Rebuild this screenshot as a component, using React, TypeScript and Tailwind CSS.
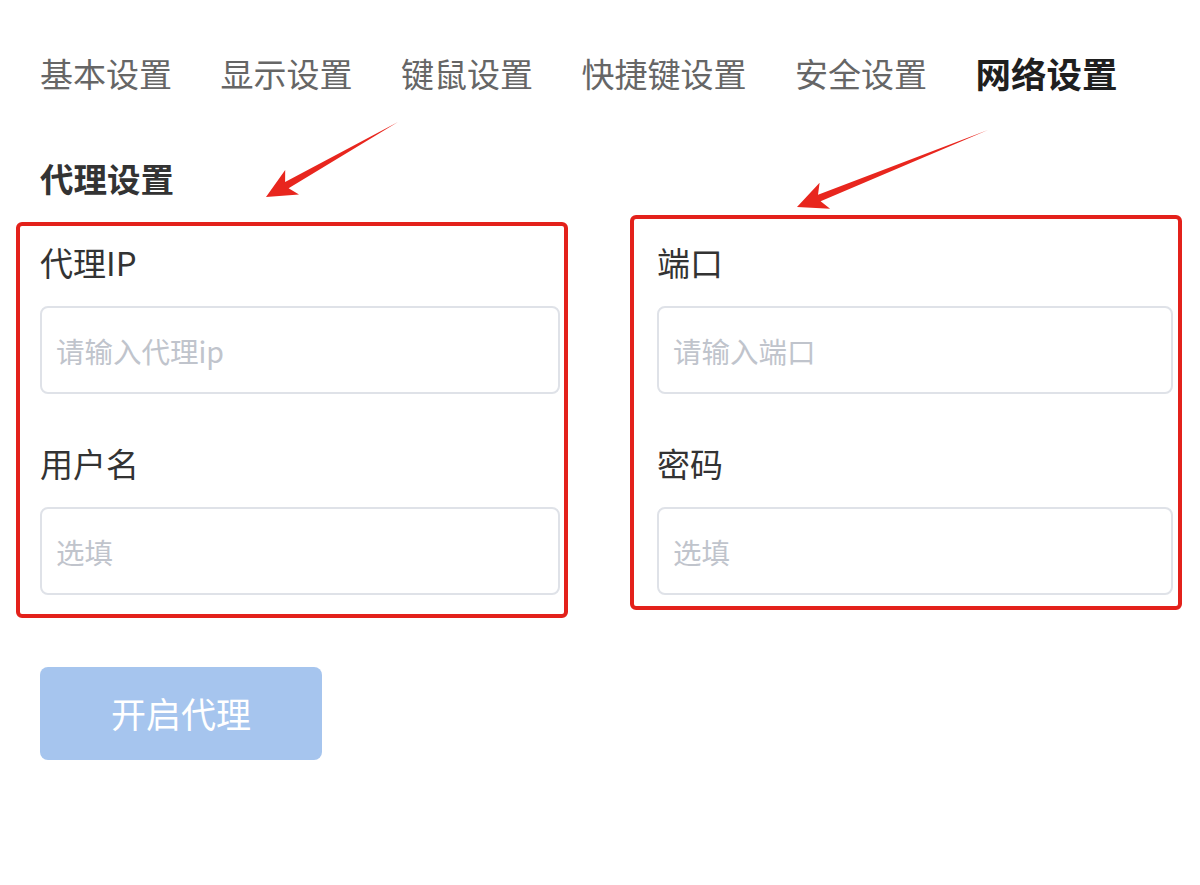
import React from "react";

const TABS = ["基本设置", "显示设置", "键鼠设置", "快捷键设置", "安全设置", "网络设置"];
const ACTIVE = 5;

type Pt = [number, number];

// tapered annotation arrow: thin tail, widening shaft, swept head
function arrowPoints(tail: Pt, tip: Pt, headLen = 30, headHalf = 14, neckHalf = 3.5) {
  const dx = tip[0] - tail[0];
  const dy = tip[1] - tail[1];
  const len = Math.hypot(dx, dy);
  const ux = dx / len;
  const uy = dy / len;
  const nx = -uy;
  const ny = ux;
  const bx = tip[0] - headLen * ux;
  const by = tip[1] - headLen * uy;
  const nbx = tip[0] - (headLen - 6) * ux;
  const nby = tip[1] - (headLen - 6) * uy;
  const pts: Pt[] = [
    tail,
    [nbx + neckHalf * nx, nby + neckHalf * ny],
    [bx + headHalf * nx, by + headHalf * ny],
    tip,
    [bx - headHalf * nx, by - headHalf * ny],
    [nbx - neckHalf * nx, nby - neckHalf * ny],
  ];
  return pts.map((p) => `${p[0].toFixed(1)},${p[1].toFixed(1)}`).join(" ");
}

function Field({ label, placeholder }: { label: string; placeholder: string }) {
  return (
    <div className="flex flex-col">
      <label className="text-[33px] leading-[40px] text-[#333333]">{label}</label>
      <input
        className="mt-[24px] h-[88px] w-full rounded-[8px] border-2 border-[#dfe2e8] bg-white px-[14px] text-[28.5px] text-[#606266] outline-none placeholder:text-[#c0c4cc]"
        placeholder={placeholder}
      />
    </div>
  );
}

export default function App() {
  return (
    <div
      className="relative h-[885px] w-[1200px] overflow-hidden bg-white pl-[40px] pt-[53px]"
      style={{ fontFamily: '"Noto Sans CJK SC", "Noto Sans", sans-serif' }}
    >
      <nav className="flex items-center gap-[48.5px]">
        {TABS.map((t, i) => (
          <span
            key={t}
            className={
              i === ACTIVE
                ? "text-[35.5px] font-bold leading-[40px] text-[#1f1f1f]"
                : "text-[33px] leading-[40px] text-[#666666]"
            }
          >
            {t}
          </span>
        ))}
      </nav>

      <h2 className="mt-[65px] text-[33.5px] font-bold leading-[40px] text-[#333333]">代理设置</h2>

      <div className="mt-[44px] grid grid-cols-[520px_516px] gap-x-[97px] gap-y-[49px]">
        <Field label="代理IP" placeholder="请输入代理ip" />
        <Field label="端口" placeholder="请输入端口" />
        <Field label="用户名" placeholder="选填" />
        <Field label="密码" placeholder="选填" />
      </div>

      <button
        type="button"
        disabled
        className="mt-[72px] h-[93px] w-[282px] rounded-[8px] bg-[#a6c5ee] text-[35px] text-white"
      >
        开启代理
      </button>

      {/* annotation overlay */}
      <div className="pointer-events-none absolute left-[16px] top-[222px] h-[396px] w-[552px] rounded-[6px] border-[4px] border-[#e3211b]" />
      <div className="pointer-events-none absolute left-[630px] top-[215px] h-[395px] w-[552px] rounded-[6px] border-[4px] border-[#e3211b]" />
      <svg className="pointer-events-none absolute inset-0" width="1200" height="885" viewBox="0 0 1200 885">
        <polygon points={arrowPoints([398, 122], [266, 197])} fill="#e8261e" />
        <polygon points={arrowPoints([988, 130], [797, 207])} fill="#e8261e" />
      </svg>
    </div>
  );
}
